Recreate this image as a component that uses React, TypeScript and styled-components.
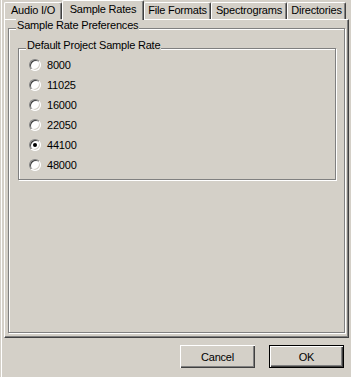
import React from 'react'
import styled, { createGlobalStyle } from 'styled-components'

/*colours*/
const Face = '#d4d0c8'
const Light = '#ffffff'
const Shadow = '#808080'
const DarkShadow = '#404040'

const GlobalStyle = createGlobalStyle`
  html, body {
    margin: 0;
    padding: 0;
    background: ${Face};
  }
  body {
    font-family: "Liberation Sans", Arial, sans-serif;
    font-size: 11px;
    letter-spacing: -0.2px;
    color: #000;
  }
`

const tabs = [
  { label: 'Audio I/O', width: 58 },
  { label: 'Sample Rates', width: 82, active: true },
  { label: 'File Formats', width: 67 },
  { label: 'Spectrograms', width: 76 },
  { label: 'Directories', width: 59 }
]

const rates = ['8000', '11025', '16000', '22050', '44100', '48000']

function App() {
  const [rate, setRate] = React.useState('44100')

  return (
    <>
      <GlobalStyle />
      <Window>
        <Frame>
          <TabStrip>
            {tabs.map((tab) => (
              <Tab key={tab.label} $width={tab.width} $active={!!tab.active}>
                {tab.label}
              </Tab>
            ))}
          </TabStrip>
          <Panel>
            <OuterGroup>
              <Caption>Sample Rate Preferences</Caption>
              <InnerGroup>
                <Caption>Default Project Sample Rate</Caption>
                {rates.map((r) => (
                  <RadioRow key={r} onClick={() => setRate(r)}>
                    <RadioCircle $checked={rate === r} />
                    <RadioLabel>{r}</RadioLabel>
                  </RadioRow>
                ))}
              </InnerGroup>
            </OuterGroup>
          </Panel>
          <ButtonBar>
            <Button>Cancel</Button>
            <Button $default>OK</Button>
          </ButtonBar>
        </Frame>
      </Window>
    </>
  )
}
export default App

const Window = styled('div')({
  width: 351,
  height: 377,
  background: Face,
  paddingLeft: 1,
  boxSizing: 'border-box',
  display: 'flex'
})

const Frame = styled('div')({
  flex: 1,
  borderLeft: `1px solid ${Light}`,
  padding: '0 2px',
  display: 'flex',
  flexDirection: 'column'
})

const TabStrip = styled('div')({
  height: 19,
  display: 'flex',
  alignItems: 'flex-end'
})

const Tab = styled('div')<{ $width: number; $active: boolean }>((p) => ({
  width: p.$width,
  boxSizing: 'border-box',
  height: p.$active ? 20 : 17,
  marginBottom: p.$active ? -1 : 0,
  position: 'relative',
  zIndex: p.$active ? 1 : 0,
  background: Face,
  borderLeft: `1px solid ${Light}`,
  borderTop: `1px solid ${Light}`,
  borderRight: `1px solid ${DarkShadow}`,
  borderTopLeftRadius: 2,
  borderTopRightRadius: 2,
  boxShadow: `inset -1px 0 ${Shadow}`,
  display: 'flex',
  justifyContent: 'center',
  alignItems: 'flex-start',
  paddingTop: p.$active ? 2 : 1,
  lineHeight: '13px',
  whiteSpace: 'nowrap'
}))

const Panel = styled('div')({
  flex: 1,
  display: 'flex',
  flexDirection: 'column',
  borderLeft: `1px solid ${Light}`,
  borderTop: `1px solid ${Light}`,
  borderRight: `1px solid ${DarkShadow}`,
  borderBottom: `1px solid ${DarkShadow}`,
  boxShadow: `inset -1px -1px ${Shadow}`,
  padding: '8px 3px 4px 3px'
})

const Group = styled('div')({
  position: 'relative',
  border: `1px solid ${Shadow}`,
  boxShadow: `inset 1px 1px ${Light}, 1px 1px ${Light}`
})

const OuterGroup = styled(Group)({
  flex: 1,
  padding: '19px 8px 0 9px'
})

const InnerGroup = styled(Group)({
  padding: '6px 0 4px 10px'
})

const Caption = styled('span')({
  position: 'absolute',
  top: -10,
  left: 7,
  padding: '0 1px',
  background: Face,
  lineHeight: '13px',
  whiteSpace: 'nowrap'
})

const RadioRow = styled('div')({
  height: 20,
  display: 'flex',
  alignItems: 'center',
  gap: 6,
  cursor: 'default'
})

const RadioCircle = styled('span')<{ $checked: boolean }>((p) => ({
  width: 12,
  height: 12,
  boxSizing: 'border-box',
  borderRadius: '50%',
  borderStyle: 'solid',
  borderWidth: 1,
  borderColor: `${Shadow} ${Light} ${Light} ${Shadow}`,
  boxShadow: `inset 1px 1px ${DarkShadow}, inset -1px -1px ${Face}`,
  background: Light,
  display: 'flex',
  alignItems: 'center',
  justifyContent: 'center',
  '&::after': {
    content: '""',
    display: p.$checked ? 'block' : 'none',
    width: 4,
    height: 4,
    borderRadius: '50%',
    background: '#000'
  }
}))

const RadioLabel = styled('span')({
  lineHeight: '13px'
})

const ButtonBar = styled('div')({
  height: 39,
  boxSizing: 'border-box',
  display: 'flex',
  justifyContent: 'flex-end',
  alignItems: 'flex-start',
  gap: 14,
  padding: '7px 5px 0 0'
})

const Button = styled('button')<{ $default?: boolean }>((p) => ({
  width: 75,
  height: 23,
  boxSizing: 'border-box',
  margin: 0,
  padding: 0,
  fontFamily: '"Liberation Sans", Arial, sans-serif',
  fontSize: 11,
  letterSpacing: '-0.2px',
  color: '#000',
  background: Face,
  border: p.$default ? '1px solid #000' : 'none',
  boxShadow: `inset 1px 1px ${Light}, inset -1px -1px ${DarkShadow}, inset -2px -2px ${Shadow}`
}))
